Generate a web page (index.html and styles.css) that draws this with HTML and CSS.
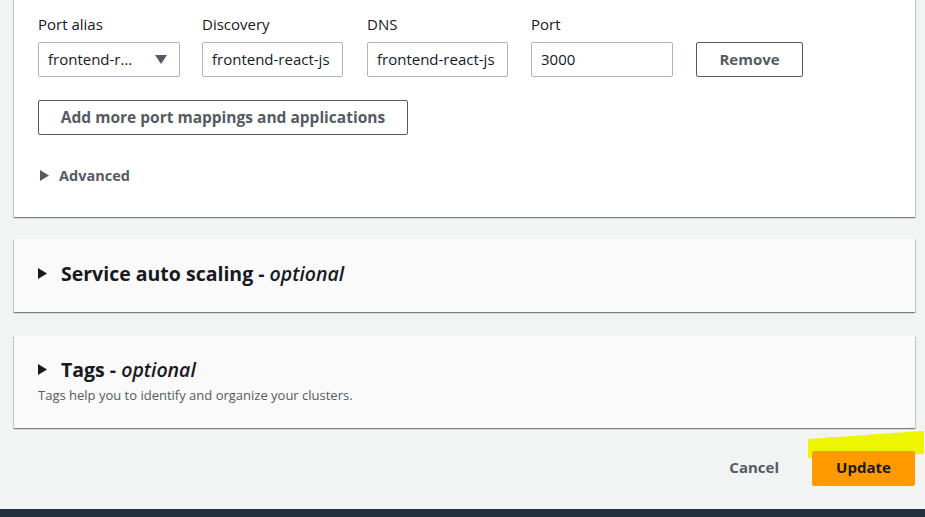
FILE: index.html
```html
<!DOCTYPE html>
<html>
<head>
<meta charset="utf-8">
<link rel="stylesheet" href="styles.css">
</head>
<body>
<div class="page">
  <section class="card card-main">
    <div class="mapping-row">
      <div class="field f-alias">
        <div class="label">Port alias</div>
        <div class="select">
          <span class="select-text">frontend-r…</span>
          <svg class="caret" width="12" height="10" viewBox="0 0 12 10"><polygon points="0,0 12,0 6,9" fill="#545b64"/></svg>
        </div>
      </div>
      <div class="field f-disc">
        <div class="label">Discovery</div>
        <div class="input">frontend-react-js</div>
      </div>
      <div class="field f-dns">
        <div class="label">DNS</div>
        <div class="input">frontend-react-js</div>
      </div>
      <div class="field f-port">
        <div class="label">Port</div>
        <div class="input">3000</div>
      </div>
      <div class="field f-remove">
        <div class="label">&nbsp;</div>
        <button class="btn btn-normal btn-remove">Remove</button>
      </div>
    </div>
    <button class="btn btn-normal btn-add">Add more port mappings and applications</button>
    <div class="advanced">
      <svg class="tri-small" width="9" height="11" viewBox="0 0 9 11"><polygon points="0,0 9,5.5 0,11" fill="#545b64"/></svg>
      <span>Advanced</span>
    </div>
  </section>

  <section class="card card-collapsed card-scaling">
    <h2 class="exp-title">
      <svg class="tri" width="9" height="11" viewBox="0 0 9 11"><polygon points="0,0 9,5.5 0,11" fill="#16191f"/></svg>
      <span>Service auto scaling - <i>optional</i></span>
    </h2>
  </section>

  <section class="card card-collapsed card-tags">
    <h2 class="exp-title">
      <svg class="tri" width="9" height="11" viewBox="0 0 9 11"><polygon points="0,0 9,5.5 0,11" fill="#16191f"/></svg>
      <span>Tags - <i>optional</i></span>
    </h2>
    <p class="desc">Tags help you to identify and organize your clusters.</p>
  </section>

  <div class="actions">
    <button class="btn btn-link">Cancel</button>
    <div class="primary-wrap">
      <svg class="highlight" width="116" height="30" viewBox="0 0 116 30"><path d="M0 8 C 30 6, 70 3, 116 0 L116 23 L0 27 Z" fill="#eef500"/></svg>
      <button class="btn btn-primary">Update</button>
    </div>
  </div>
</div>
<footer class="footer"></footer>
</body>
</html>
```

FILE: styles.css
```css
html, body {
  margin: 0;
  padding: 0;
  background: #f2f3f3;
  font-family: "Open Sans", "Noto Sans", sans-serif;
  color: #16191f;
  font-size: 15px;
  overflow: hidden;
}

.page {
  padding: 0 10px 0 14px;
}

.card {
  box-sizing: border-box;
  width: 901px;
  background: #ffffff;
  box-shadow: 0 1px 1px 0 rgba(0, 28, 36, 0.35), 1px 1px 1px 0 rgba(0, 28, 36, 0.15), -1px 1px 1px 0 rgba(0, 28, 36, 0.15);
}

.card-main {
  margin-top: -20px;
  padding: 34px 20px 32px 24px;
  height: 237px;
}

.mapping-row {
  display: flex;
  align-items: flex-end;
}

.field {
  display: flex;
  flex-direction: column;
}

.f-alias { width: 142px; margin-right: 22px; }
.f-disc { width: 141px; margin-right: 24px; }
.f-dns { width: 141px; margin-right: 23px; }
.f-port { width: 142px; margin-right: 23px; }
.f-remove { width: 107px; }

.label {
  font-size: 15px;
  line-height: 20px;
  margin-bottom: 8px;
  color: #16191f;
}

.select, .input {
  box-sizing: border-box;
  height: 35px;
  border: 1px solid #aab7b8;
  border-radius: 2px;
  background: #fff;
  display: flex;
  align-items: center;
  font-size: 15px;
  color: #16191f;
  white-space: nowrap;
  overflow: hidden;
  padding-bottom: 2px;
}

.select {
  padding-left: 9px;
  padding-right: 12px;
  justify-content: space-between;
}

.input {
  padding-left: 9px;
  padding-right: 9px;
}

.caret {
  margin-top: 2px;
}

.btn {
  font-family: "Open Sans", "Noto Sans", sans-serif;
  font-weight: 700;
  font-size: 15px;
  cursor: pointer;
  margin: 0;
}

.btn-normal {
  box-sizing: border-box;
  height: 35px;
  border: 1px solid #545b64;
  border-radius: 2px;
  background: #fff;
  color: #545b64;
  padding: 0 20px;
}

.btn-remove {
  width: 107px;
  padding: 0 0 2px 0;
}

.btn-add {
  display: block;
  width: 370px;
  margin-top: 23px;
  font-size: 15.5px;
  padding: 0 0 1px 0;
}

.advanced {
  display: flex;
  align-items: center;
  margin-top: 30px;
  height: 20px;
  font-weight: 700;
  font-size: 14.5px;
  color: #545b64;
}

.tri-small {
  margin-left: 2px;
  margin-right: 10px;
}

.card-collapsed {
  background: #fafafa;
  padding-left: 24px;
}

.card-scaling {
  margin-top: 22px;
  height: 73px;
  padding-top: 22px;
}

.card-tags {
  margin-top: 24px;
  height: 92px;
  padding-top: 21px;
}

.exp-title {
  margin: 0;
  display: flex;
  align-items: center;
  height: 24px;
  font-size: 19.5px;
  font-weight: 700;
  color: #16191f;
}

.exp-title i {
  font-weight: 600;
  font-style: italic;
}

.tri {
  margin-left: 0;
  margin-right: 14px;
}

.desc {
  margin: 6px 0 0 0;
  font-size: 13px;
  line-height: 16px;
  color: #545b64;
}

.actions {
  display: flex;
  justify-content: flex-end;
  align-items: center;
  width: 901px;
  margin-top: 23px;
}

.btn-link {
  background: transparent;
  border: none;
  color: #545b64;
  font-size: 15px;
  padding: 0 0 3px 0;
  margin-right: 33px;
  height: 35px;
}

.primary-wrap {
  position: relative;
}

.highlight {
  position: absolute;
  left: -4px;
  top: -20px;
  z-index: 0;
}

.btn-primary {
  position: relative;
  z-index: 1;
  box-sizing: border-box;
  width: 103px;
  height: 35px;
  background: #ff9900;
  border: 1px solid #ff9900;
  border-radius: 2px;
  color: #16191f;
  font-size: 15px;
  padding: 0 0 3px 0;
}

.footer {
  margin-top: 23px;
  height: 20px;
  background: #232f3e;
}
```
